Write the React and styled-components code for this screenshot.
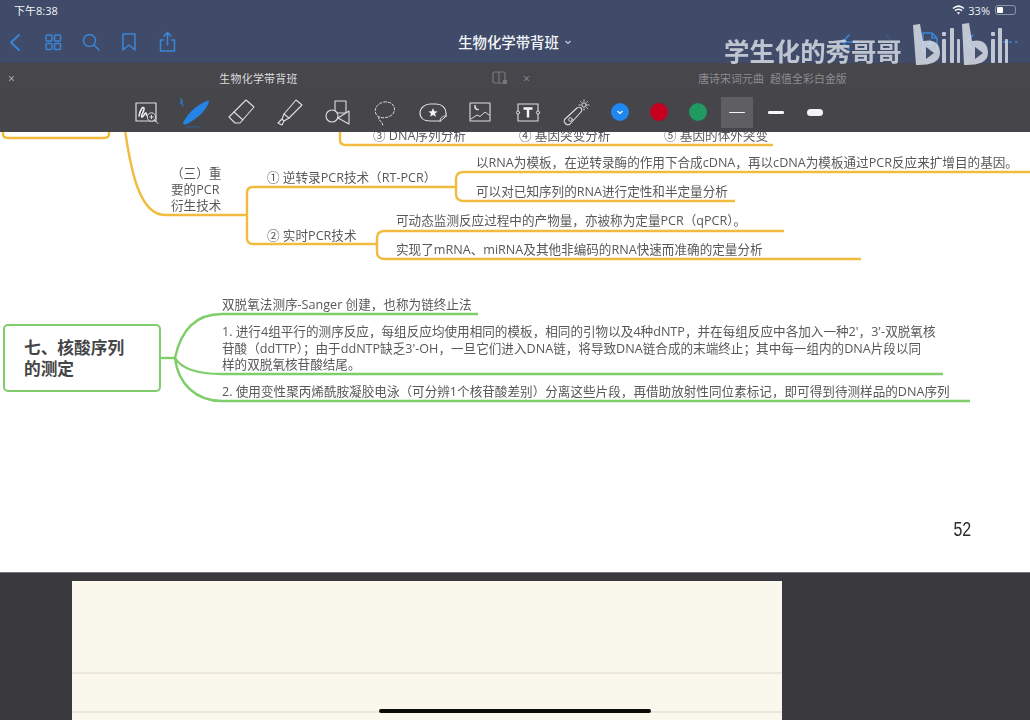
import React from 'react';
import styled, { createGlobalStyle } from 'styled-components';

const GlobalStyle = createGlobalStyle`
  html, body {
    margin: 0;
    padding: 0;
    background: #3a393d;
  }
`;

const CJK = `"Open Sans", "Noto Sans CJK SC", sans-serif`;

// Layout
const Screen = styled.div`
  position: relative;
  display: flex;
  flex-direction: column;
  width: 1030px;
  height: 720px;
  overflow: hidden;
  font-family: ${CJK};

  & > * {
    flex-shrink: 0;
  }
`;

const Chrome = styled.header`
  height: 63px;
  background: #3f4b69;
  color: #fff;
`;

const StatusBar = styled.div`
  display: flex;
  align-items: center;
  justify-content: space-between;
  height: 20px;
  padding: 0 14px;
  font-size: 11px;
  color: #f0f2f6;
`;

const StatusRight = styled.div`
  display: flex;
  align-items: center;
  gap: 3px;
`;

const Battery = styled.div`
  position: relative;
  box-sizing: border-box;
  width: 21px;
  height: 10px;
  margin-left: 2px;
  padding: 1px;
  border: 1px solid #8a93a8;
  border-radius: 3px;

  &::before {
    content: '';
    display: block;
    width: 33%;
    height: 100%;
    background: #fff;
    border-radius: 1px;
  }
`;

const NavBar = styled.nav`
  display: grid;
  grid-template-columns: 1fr auto 1fr;
  align-items: center;
  height: 43px;
`;

const NavGroup = styled.div`
  display: flex;
  align-items: center;
  justify-content: ${({ $end }) => ($end ? 'flex-end' : 'flex-start')};
  gap: ${({ $end }) => ($end ? '16px' : '14px')};
  padding: ${({ $end }) => ($end ? '0 8px 0 0' : '0 0 0 3px')};
  color: #3a86d8;
`;

const NavTitle = styled.div`
  display: flex;
  align-items: center;
  gap: 5px;
  font-size: 14.4px;
  font-weight: 500;
  color: #f4f5f8;
`;

const TabBar = styled.div`
  display: grid;
  grid-template-columns: 1fr 1fr;
  height: 30px;
  background: #47464a;
`;

const Tab = styled.div`
  position: relative;
  display: flex;
  align-items: center;
  justify-content: center;
  padding-left: ${({ $second }) => ($second ? '0' : '2px')};
  font-size: 10.9px;
  letter-spacing: ${({ $second }) => ($second ? '0.1px' : '0.3px')};
  color: ${({ $second }) => ($second ? '#8d8c92' : '#dcdcdf')};
`;

const TabClose = styled.span`
  position: absolute;
  left: 8px;
  top: 50%;
  transform: translateY(-50%);
  font-size: 12px;
  color: ${({ $dim }) => ($dim ? '#8d8c92' : '#b5b5b8')};
`;

const SplitIcon = styled.svg`
  position: absolute;
  right: 5px;
  top: 6px;
`;

const Toolbar = styled.div`
  display: flex;
  align-items: center;
  height: 39px;
  padding-left: 122px;
  background: #464549;
`;

const Tool = styled.div`
  display: flex;
  align-items: center;
  justify-content: center;
  flex: 0 0 47.8px;
`;

const ColorGroup = styled.div`
  display: flex;
  align-items: center;
  height: 100%;
  margin-left: 0.5px;
`;

const Swatch = styled.div`
  display: flex;
  align-items: center;
  justify-content: center;
  width: 39px;
`;

const Dot = styled.div`
  display: flex;
  align-items: center;
  justify-content: center;
  width: 18px;
  height: 18px;
  margin-top: -2px;
  border-radius: 50%;
  background: ${({ $color }) => $color};
`;

const Thickness = styled.div`
  display: flex;
  align-items: center;
  justify-content: center;
  width: ${({ $active }) => ($active ? '32px' : '39px')};
  height: 31px;
  margin: ${({ $active }) => ($active ? '0 3.5px' : '0')};
  background: ${({ $active }) => ($active ? '#5f5e62' : 'transparent')};
`;

const Stroke = styled.div`
  width: 16px;
  height: ${({ $h }) => $h}px;
  border-radius: ${({ $h }) => $h / 2}px;
  background: #f4f4f4;
`;

// Mind map page
const MindPage = styled.main`
  position: relative;
  height: 441px;
  overflow: hidden;
  background: #fff;
  border-bottom: 1px solid #77767a;
  box-sizing: border-box;
`;

const Connectors = styled.svg`
  position: absolute;
  left: 0;
  top: 0;
  filter: blur(0.3px);
`;

const MapText = styled.div`
  position: absolute;
  left: ${({ $x }) => $x}px;
  top: ${({ $y }) => $y - 140}px;
  font-size: 12.6px;
  line-height: 16px;
  color: #58585a;
  white-space: nowrap;
  filter: blur(0.25px);
`;

const Paragraph = styled(MapText)`
  line-height: 16.5px;
`;

const TopicBox = styled.div`
  position: absolute;
  left: 3px;
  top: 192px;
  box-sizing: border-box;
  width: 158px;
  height: 68px;
  padding: 11px 0 0 19px;
  background: #fff;
  border: 2.5px solid #7fce6b;
  border-radius: 5px;
  font-size: 16.7px;
  line-height: 21px;
  font-weight: 700;
  color: #454545;
`;

const PageNumber = styled.div`
  position: absolute;
  right: 59px;
  top: 386px;
  font-family: "Liberation Sans", sans-serif;
  font-size: 20px;
  line-height: 22px;
  color: #2c2c2c;
  transform: scaleX(0.8);
  transform-origin: right center;
`;

// Next page peeking from below
const Shelf = styled.section`
  flex: 1 1 0;
  min-height: 0;
  overflow: hidden;
  padding: 8px 0 0 72px;
  background: #3a393d;
`;

const Paper = styled.div`
  box-sizing: border-box;
  width: 710px;
  height: 139px;
  padding-top: 91px;
  background: #faf8ec;
`;

const Rule = styled.div`
  height: 2px;
  margin-bottom: 37px;
  background: #ebe8db;
`;

const HomeBar = styled.div`
  position: absolute;
  left: 379px;
  top: 709px;
  width: 272px;
  height: 4px;
  border-radius: 2px;
  background: #0b0b08;
`;

const Watermark = styled.div`
  position: absolute;
  left: 724px;
  top: 28px;
  display: flex;
  align-items: center;
  gap: 11px;
  font-family: "Noto Sans CJK SC", sans-serif;
  font-size: 25.4px;
  font-weight: 700;
  line-height: 44px;
  white-space: nowrap;
  color: rgba(222, 226, 234, 0.8);
  filter: blur(0.4px);
`;

const LogoMark = styled.svg`
  margin-top: -11px;
`;

// Icons
const BlueIcon = ({ children }) => (
  <svg width="24" height="24" viewBox="0 0 24 24" fill="none" stroke="currentColor" strokeWidth="1.5" strokeLinecap="round" strokeLinejoin="round">
    {children}
  </svg>
);

const LineIcon = ({ children }) => (
  <svg width="30" height="30" viewBox="0 0 30 30" fill="none" stroke="#dedee0" strokeWidth="1" strokeLinecap="round" strokeLinejoin="round">
    {children}
  </svg>
);

const Logo = () => (
  <LogoMark width="100" height="44" viewBox="0 0 100 44" fill="rgba(222,226,234,0.82)">
    <path d="M0 2 L7 1 L10 18 C20 16 27 19 27 30 C27 39 18 42 5 42 L3 42 Z" />
    <path d="M13 24 L21 30 L13 36 Z" fill="#46506c" />
    <rect x="29" y="9" width="4" height="4" rx="1" />
    <rect x="29" y="16" width="4" height="24" rx="1" />
    <rect x="37" y="5" width="4" height="35" rx="1" />
    <rect x="44" y="16" width="3" height="24" rx="1" />
    <path d="M49 1 L56 0 L59 18 C68 16 75 19 75 30 C75 39 66 42 53 42 L51 42 Z" />
    <path d="M62 24 L70 30 L62 36 Z" fill="#46506c" />
    <rect x="78" y="9" width="4" height="4" rx="1" />
    <rect x="78" y="16" width="4" height="24" rx="1" />
    <rect x="85" y="5" width="4" height="35" rx="1" />
    <rect x="92" y="16" width="3" height="24" rx="1" />
  </LogoMark>
);

const yellow = '#f1bb3e';
const green = '#7fce6b';

const tools = [
  <LineIcon key="ink">
    <rect x="5" y="5" width="20" height="18" strokeWidth="1.2" />
    <path d="M8 18 C9 12 12 8 13 10 C14 12 9 19 11 19 C13 19 14 14 15 15 C16 16 15 18 17 18" strokeWidth="1.5" stroke="#f2f2f2" />
    <circle cx="20.5" cy="19" r="4.2" fill="#464549" />
    <path d="M23.5 22 L27 25.5 M18.8 19 H22.2 M20.5 17.3 V20.7" />
  </LineIcon>,
  <svg key="pen" width="32" height="32" viewBox="0 0 30 30">
    <path d="M29 3 C29 10 19 20 7 26 L4.5 24.5 C9 15 19 6 29 3 Z" fill="#2484e6" />
    <path d="M2 0 L5 4.5 L3.6 4.5 L5.6 9.5 L1.4 5 L3 5 Z" fill="#2484e6" />
    <path d="M7 28 H21" stroke="#2d5e92" strokeWidth="1" />
  </svg>,
  <LineIcon key="eraser">
    <path d="M20 2 L28 9 L14 25 L9 25 L3 19 Z" strokeWidth="1.1" />
    <path d="M8 14 L17 22" strokeWidth="1.1" />
  </LineIcon>,
  <LineIcon key="marker">
    <path d="M22 2 L28 7 L15 20 L10 16 Z" strokeWidth="1.1" />
    <path d="M10 16 L8 21 L10 23 L15 20 M8 21 L4 25 L8 27 L10 23" strokeWidth="1.1" />
  </LineIcon>,
  <LineIcon key="shapes">
    <rect x="13" y="3" width="11" height="12" strokeWidth="1.1" />
    <circle cx="10" cy="18" r="6" fill="#464549" strokeWidth="1.1" />
    <path d="M27 13 V26 L16 20 Z" fill="#464549" strokeWidth="1.1" />
  </LineIcon>,
  <LineIcon key="lasso">
    <path d="M14 4 C22 3 26 9 24 14 C22 19 14 21 9 19 C3 16 4 6 14 4 Z" strokeDasharray="2.4 1.8" strokeWidth="1" />
    <path d="M9 19 C8 22 11 23 12 25 L13 28" strokeDasharray="2 1.6" strokeWidth="1" />
  </LineIcon>,
  <LineIcon key="sticker">
    <path d="M22 23 H12 C6 23 2 20 2 15 C2 10 7 6 12 6 H18 C24 6 28 10 28 15 V18" strokeWidth="1.2" />
    <path d="M22 23 C22 20 24 18 28 18 Z" strokeWidth="1" />
    <path d="M15 10 L16.3 13.2 L19.6 13.4 L17 15.6 L17.9 18.8 L15 17 L12.1 18.8 L13 15.6 L10.4 13.4 L13.7 13.2 Z" fill="#f4f4f4" stroke="none" />
  </LineIcon>,
  <LineIcon key="image">
    <rect x="5" y="5" width="20" height="18" strokeWidth="1.1" />
    <path d="M6 21 L12 17 L15 18.5 L20 14 L24 17" />
    <path d="M10 7.5 C9 11 11 12.5 14 11.5 C11.5 11.5 10.5 10 10 7.5 Z" fill="#dedee0" />
  </LineIcon>,
  <LineIcon key="text">
    <rect x="5" y="6" width="20" height="17" strokeWidth="1.1" />
    <circle cx="5" cy="14.5" r="1.6" fill="#464549" />
    <circle cx="25" cy="14.5" r="1.6" fill="#464549" />
    <path d="M10.5 10.5 H19.5 M15 10.5 V19.5" stroke="#f6f6f6" strokeWidth="2.4" strokeLinecap="butt" />
  </LineIcon>,
  <LineIcon key="laser">
    <path d="M4 21 L16 10 C17 9 19 9 20 10 C21 11 21 13 20 14 L9 26 C8 27 6 27 5 26 L4 25 C3 24 3 22 4 21 Z" strokeWidth="1.1" />
    <circle cx="9.5" cy="21.5" r="1.8" />
    <circle cx="23" cy="7" r="2.2" />
    <path d="M23 2 V3.2 M23 10.8 V12 M18 7 H19.2 M26.8 7 H28 M19.6 3.6 L20.4 4.4 M25.6 9.6 L26.4 10.4 M26.4 3.6 L25.6 4.4" />
  </LineIcon>,
];

const App = () => (
  <Screen>
    <GlobalStyle />
    <Chrome>
      <StatusBar>
        <span>下午8:38</span>
        <StatusRight>
          <svg width="13" height="10" viewBox="0 0 13 10" fill="none" stroke="#fff" strokeWidth="1.5">
            <path d="M1 3.5 C4.5 0.5 8.5 0.5 12 3.5" />
            <path d="M3 5.6 C5 4 8 4 10 5.6" />
            <path d="M6.5 9.4 L4.9 7.6 C5.8 7 7.2 7 8.1 7.6 Z" fill="#fff" stroke="none" />
          </svg>
          <span>33%</span>
          <Battery />
        </StatusRight>
      </StatusBar>
      <NavBar>
        <NavGroup>
          <BlueIcon>
            <path d="M16 5 L8 12.5 L16 20" strokeWidth="2" />
          </BlueIcon>
          <BlueIcon>
            <rect x="5" y="5" width="6" height="6" rx="1" />
            <rect x="13.5" y="5" width="6" height="6" rx="1" />
            <rect x="5" y="13.5" width="6" height="6" rx="1" />
            <rect x="13.5" y="13.5" width="6" height="6" rx="1" />
          </BlueIcon>
          <BlueIcon>
            <circle cx="10.5" cy="10.5" r="6" />
            <path d="M15 15 L20 20" />
          </BlueIcon>
          <BlueIcon>
            <path d="M6 4 H18 V20 L12 15 L6 20 Z" />
          </BlueIcon>
          <BlueIcon>
            <path d="M8.5 10 H5.5 V21 H19.5 V10 H16.5 M12.5 15 V3 M9 6 L12.5 2.5 L16 6" />
          </BlueIcon>
        </NavGroup>
        <NavTitle>
          生物化学带背班
          <svg width="8" height="8" viewBox="0 0 8 8" fill="none" stroke="#c9cdd8" strokeWidth="1.1">
            <path d="M1.5 3 L4 5.5 L6.5 3" />
          </svg>
        </NavTitle>
        <NavGroup $end>
          <BlueIcon>
            <path d="M20 12 H5 M11 5 L4.5 12 L11 19" />
          </BlueIcon>
          <BlueIcon>
            <path d="M8 5 L15 12 L8 19" strokeWidth="1" opacity="0.5" />
          </BlueIcon>
          <BlueIcon>
            <path d="M5 3 H14 L19 8 V21 H5 Z M14 3 V8 H19 M12 10 V17 M8.5 13.5 H15.5" />
          </BlueIcon>
          <BlueIcon>
            <path d="M15 5 L8 12 L15 19" />
          </BlueIcon>
          <BlueIcon>
            <path d="M6 12 H6.5 M12 12 H12.5 M18 12 H18.5" strokeWidth="2" />
          </BlueIcon>
        </NavGroup>
      </NavBar>
    </Chrome>

    <TabBar>
      <Tab>
        <TabClose>×</TabClose>
        生物化学带背班
        <SplitIcon width="20" height="18" viewBox="0 0 20 18" fill="none" stroke="#79787c" strokeWidth="1.2">
          <rect x="3" y="3" width="12" height="11" rx="1.5" />
          <path d="M9 3 V14" />
          <rect x="13" y="11" width="4" height="4" fill="#79787c" stroke="none" />
        </SplitIcon>
      </Tab>
      <Tab $second>
        <TabClose $dim>×</TabClose>
        唐诗宋词元曲&nbsp;&nbsp;超值全彩白金版
      </Tab>
    </TabBar>

    <Toolbar>
      {tools.map((icon) => (
        <Tool key={icon.key}>{icon}</Tool>
      ))}
      <ColorGroup>
        <Swatch>
          <Dot $color="#1e87f0">
            <svg width="8" height="8" viewBox="0 0 8 8" fill="none" stroke="#fff" strokeWidth="1.1">
              <path d="M1.5 3 L4 5.5 L6.5 3" />
            </svg>
          </Dot>
        </Swatch>
        <Swatch>
          <Dot $color="#c6001f" />
        </Swatch>
        <Swatch>
          <Dot $color="#1f9a62" />
        </Swatch>
        <Thickness $active>
          <Stroke $h={1} />
        </Thickness>
        <Thickness>
          <Stroke $h={2.5} />
        </Thickness>
        <Thickness>
          <Stroke $h={7} />
        </Thickness>
      </ColorGroup>
    </Toolbar>

    <MindPage>
      <Connectors width="1030" height="441" viewBox="0 132 1030 441" fill="none" strokeWidth="2.4">
        <g stroke={yellow}>
          <path d="M3 130 V134 Q3 138 8 138 H104 Q109 138 109 134 V130" />
          <path d="M340 130 V140 Q340 145 346 145 H773" />
          <path d="M125 130 C131 172 140 215 165 215 H247" />
          <path d="M456 187 H253 Q247 187 247 193 V238 Q247 244 253 244 H377" />
          <path d="M1030 172 H464 Q456 172 456 179 V194 Q456 201 464 201 H735" />
          <path d="M784 231 H385 Q377 231 377 238 V252 Q377 259 385 259 H861" />
        </g>
        <g stroke={green}>
          <path d="M160 358 H175" />
          <path d="M478 314 H222 C192 314 180 334 175 358" />
          <path d="M175 358 C181 368 196 374 222 374 H943" />
          <path d="M175 358 C178 384 196 401 222 401 H970" />
        </g>
      </Connectors>

      <MapText $x={373} $y={136}>③ DNA序列分析</MapText>
      <MapText $x={519} $y={136}>④ 基因突变分析</MapText>
      <MapText $x={664} $y={136}>⑤ 基因的体外突变</MapText>

      <MapText $x={171} $y={174}>
        （三）重
        <br />
        要的PCR
        <br />
        衍生技术
      </MapText>
      <MapText $x={267} $y={178}>① 逆转录PCR技术（RT-PCR）</MapText>
      <MapText $x={267} $y={236}>② 实时PCR技术</MapText>
      <MapText $x={476} $y={163}>以RNA为模板，在逆转录酶的作用下合成cDNA，再以cDNA为模板通过PCR反应来扩增目的基因。</MapText>
      <MapText $x={476} $y={192}>可以对已知序列的RNA进行定性和半定量分析</MapText>
      <MapText $x={396} $y={221}>可动态监测反应过程中的产物量，亦被称为定量PCR（qPCR）。</MapText>
      <MapText $x={396} $y={250}>实现了mRNA、miRNA及其他非编码的RNA快速而准确的定量分析</MapText>

      <TopicBox>
        七、核酸序列
        <br />
        的测定
      </TopicBox>
      <MapText $x={222} $y={305}>双脱氧法测序-Sanger 创建，也称为链终止法</MapText>
      <Paragraph $x={222} $y={332}>
        1. 进行4组平行的测序反应，每组反应均使用相同的模板，相同的引物以及4种dNTP，并在每组反应中各加入一种2'，3'-双脱氧核
        <br />
        苷酸（ddTTP）；由于ddNTP缺乏3'-OH，一旦它们进入DNA链，将导致DNA链合成的末端终止；其中每一组内的DNA片段以同
        <br />
        样的双脱氧核苷酸结尾。
      </Paragraph>
      <MapText $x={222} $y={392}>2. 使用变性聚丙烯酰胺凝胶电泳（可分辨1个核苷酸差别）分离这些片段，再借助放射性同位素标记，即可得到待测样品的DNA序列</MapText>

      <PageNumber>52</PageNumber>
    </MindPage>

    <Shelf>
      <Paper>
        <Rule />
        <Rule />
      </Paper>
    </Shelf>

    <Watermark>
      学生化的秀哥哥
      <Logo />
    </Watermark>
    <HomeBar />
  </Screen>
);

export default App;
